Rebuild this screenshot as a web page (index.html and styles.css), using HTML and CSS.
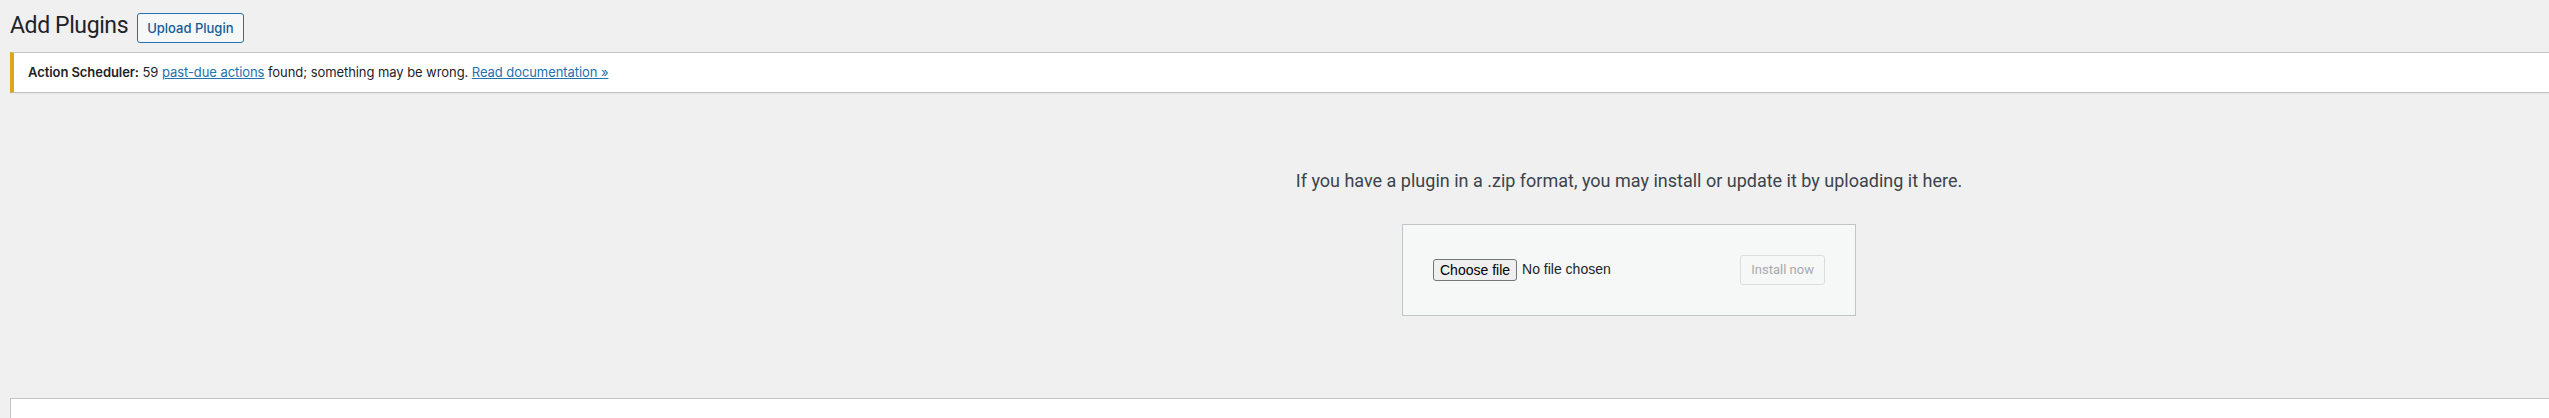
FILE: index.html
```html
<!DOCTYPE html>
<html lang="en">
<head>
<meta charset="utf-8">
<title>Add Plugins</title>
<link rel="stylesheet" href="styles.css">
</head>
<body>
<div class="wrap">
  <div class="title-row">
    <h1 class="page-title">Add Plugins</h1>
    <a href="#" class="page-title-action">Upload Plugin</a>
  </div>
  <div class="notice notice-warning">
    <p><strong>Action Scheduler:</strong> 59 <a href="#">past-due actions</a> found; something may be wrong. <a href="#">Read documentation »</a></p>
  </div>
  <div class="upload-plugin">
    <p class="install-help">If you have a plugin in a .zip format, you may install or update it by uploading it here.</p>
    <form class="upload-form">
      <div class="file-field">
        <label class="file-button">Choose file<input type="file" class="file-input"></label>
        <span class="file-name">No file chosen</span>
      </div>
      <button type="button" class="install-button" disabled>Install now</button>
    </form>
  </div>
  <div class="list-table"></div>
</div>
</body>
</html>
```

FILE: styles.css
```css
html, body {
  margin: 0;
  padding: 0;
  overflow: hidden;
  background: #f0f0f1;
}

body {
  font-family: Roboto, "Noto Sans", "Liberation Sans", sans-serif;
  color: #1d2327;
  font-size: 13px;
  line-height: 1.4;
}

.wrap {
  margin-left: 10px;
  width: 3238px;
}

.title-row {
  display: flex;
  align-items: flex-start;
  padding-top: 11px;
}

.page-title {
  margin: 0 9px 0 0;
  font-size: 23px;
  font-weight: 400;
  line-height: 30px;
  letter-spacing: -0.4px;
  color: #1d2327;
}

.page-title-action {
  margin-top: 2px;
  box-sizing: border-box;
  height: 30px;
  padding: 0 9px;
  border: 1px solid #2271b1;
  border-radius: 3px;
  background: #f6f7f7;
  color: #135e96;
  font-family: Inter, Roboto, sans-serif;
  font-size: 13px;
  font-weight: 500;
  line-height: 28px;
  text-decoration: none;
}

.notice {
  margin-top: 9px;
  background: #fff;
  border: 1px solid #c3c4c7;
  border-left: 4px solid #dba617;
  border-right: 0;
  padding: 1px 12px;
  box-shadow: 0 1px 1px rgba(0, 0, 0, 0.04);
}

.notice p {
  margin: 6.5px 0;
  padding: 2px;
  font-family: Inter, Roboto, sans-serif;
  font-size: 13px;
  line-height: 19.5px;
  letter-spacing: -0.07px;
}

.notice strong {
  font-weight: 600;
}

.notice a {
  color: #2271b1;
  text-decoration: underline;
}

.upload-plugin {
  padding-top: 74px;
  text-align: center;
}

.install-help {
  margin: 0;
  font-size: 18px;
  line-height: 27px;
  color: #3c434a;
}

.upload-form {
  box-sizing: border-box;
  display: inline-flex;
  justify-content: space-between;
  align-items: center;
  width: 454px;
  margin: 30px 0 0;
  padding: 30px;
  background: #f6f7f7;
  border: 1px solid #c3c4c7;
}

.file-field {
  display: flex;
  align-items: center;
  gap: 5px;
  width: 306px;
  text-align: left;
}

.file-button {
  box-sizing: border-box;
  height: 22px;
  padding: 0 6px;
  border: 1px solid #767676;
  border-radius: 3px;
  background: #efefef;
  color: #000;
  font-family: "Liberation Sans", Arial, sans-serif;
  font-size: 14px;
  line-height: 20px;
}

.file-input {
  display: none;
}

.file-name {
  font-family: "Liberation Sans", Arial, sans-serif;
  font-size: 14px;
  color: #1d2327;
}

.install-button {
  box-sizing: border-box;
  height: 30px;
  padding: 0 10px;
  border: 1px solid #dcdcde;
  border-radius: 3px;
  background: #f6f7f7;
  color: #a7aaad;
  font-family: Roboto, "Noto Sans", sans-serif;
  font-size: 13px;
  line-height: 28px;
}

.list-table {
  margin-top: 82px;
  height: 40px;
  background: #fff;
  border: 1px solid #c3c4c7;
  border-right: 0;
}
```
